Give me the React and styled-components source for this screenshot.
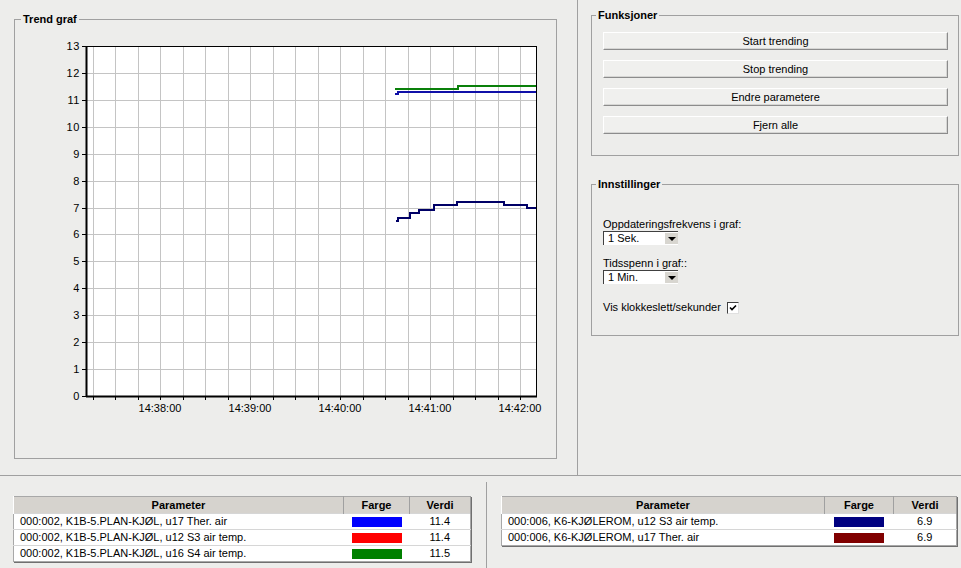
import React from 'react'
import styled, { createGlobalStyle } from 'styled-components'

const GlobalStyle = createGlobalStyle`
  html, body {
    margin: 0;
    padding: 0;
    background: #ededeb;
  }
  body {
    font-family: "Liberation Sans", Arial, sans-serif;
    font-size: 11px;
    color: #000;
  }
`

const Window = styled.div`
  width: 961px;
  height: 568px;
  display: grid;
  grid-template-rows: 475px 1px 1fr;
  background: #ededeb;
  overflow: hidden;
`

const TopArea = styled.div`
  display: grid;
  grid-template-columns: 577px 1px 1fr;
`

const BottomArea = styled.div`
  display: grid;
  grid-template-columns: 486px 1px 1fr;
`

const VLine = styled.div`
  background: #a0a0a0;
  margin-top: ${(p) => p.$top || 0}px;
`

const HLine = styled.div`
  background: #a0a0a0;
`

const LeftPane = styled.div`
  padding: 13px 0 0 14px;
`

const RightPane = styled.div`
  padding: 9px 0 0 13px;
  display: flex;
  flex-direction: column;
  gap: 22px;
`

const GroupBox = styled.fieldset`
  box-sizing: border-box;
  margin: 0;
  min-width: 0;
  width: ${(p) => p.$w}px;
  height: ${(p) => p.$h}px;
  padding: 0;
  border: 1px solid #a0a0a0;
`

const GroupTitle = styled.legend`
  margin-left: ${(p) => p.$indent || 4}px;
  padding: 0 2px;
  font-weight: bold;
  font-size: 11px;
  line-height: 13px;
`

const GroupBody = styled.div`
  padding: ${(p) => p.$pad};
`

const ButtonStack = styled.div`
  display: flex;
  flex-direction: column;
  gap: 10px;
`

const Button = styled.button`
  box-sizing: border-box;
  height: 18px;
  width: 100%;
  margin: 0;
  padding: 0;
  font-family: "Liberation Sans", Arial, sans-serif;
  font-size: 11px;
  color: #000;
  background: #f0f0ee;
  border: 1px solid;
  border-color: #ffffff #8c8c8c #8c8c8c #ffffff;
  box-shadow: inset -1px -1px 0 #d6d6d4;
`

const FieldLabel = styled.div`
  line-height: 13px;
  margin-top: ${(p) => p.$gap || 0}px;
`

const Select = styled.div`
  box-sizing: border-box;
  width: 75px;
  height: 14px;
  display: flex;
  align-items: stretch;
  background: #fff;
  border-left: 1px solid #404040;
  border-top: 1px solid #404040;
`

const SelectValue = styled.span`
  flex: 1;
  padding-left: 4px;
  line-height: 13px;
`

const SelectArrow = styled.span`
  width: 13px;
  margin: 1px 0;
  background: #d8d6d0;
  display: flex;
  align-items: center;
  justify-content: center;

  &::after {
    content: '';
    border-left: 4px solid transparent;
    border-right: 4px solid transparent;
    border-top: 4px solid #000;
  }
`

const CheckRow = styled.div`
  display: flex;
  align-items: center;
  gap: 6px;
  margin-top: 17px;
  line-height: 13px;
`

const CheckBox = styled.span`
  box-sizing: border-box;
  width: 12px;
  height: 12px;
  background: #fff;
  border-left: 1px solid #404040;
  border-top: 1px solid #404040;
  border-right: 1px solid #e0e0e0;
  border-bottom: 1px solid #e0e0e0;
  display: flex;
  align-items: center;
  justify-content: center;
`

const TablePane = styled.div`
  padding: 20px 0 0 ${(p) => p.$left}px;
`

const Grid = styled.table`
  width: ${(p) => p.$w}px;
  table-layout: fixed;
  border-collapse: collapse;
  background: #fff;
  border: 1px solid #a8a8a8;
  box-shadow: 1px 1px 0 #707070;
  font-size: 11px;
`

const HeadCell = styled.th`
  height: 16px;
  padding: 0;
  background: #d6d3ce;
  font-weight: bold;
  text-align: center;
  border-left: 1px solid #fff;
  border-right: 1px solid #a0a0a0;
  line-height: 15px;
`

const Row = styled.tr`
  height: 16px;
  border-top: 1px solid #d6d6d6;
`

const Cell = styled.td`
  padding: 0 0 0 ${(p) => (p.$center ? 0 : 6)}px;
  text-align: ${(p) => (p.$center ? 'center' : 'left')};
  white-space: nowrap;
  overflow: hidden;
  line-height: 15px;
`

const Swatch = styled.span`
  display: inline-block;
  vertical-align: middle;
  width: 50px;
  height: 10px;
  background: ${(p) => p.$color};
`

const X0 = 86
const X1 = 536
const Y0 = 46
const Y1 = 396
const yFor = (v) => Y1 - (v * (Y1 - Y0)) / 13

const gridX = Array.from({ length: 20 }, (_, k) => 92.5 + 22.5 * k)
const timeLabels = { 3: '14:38:00', 7: '14:39:00', 11: '14:40:00', 15: '14:41:00', 19: '14:42:00' }

function TrendChart() {
  const r = (n) => Math.round(n) + 0.5
  return (
    <svg width={541} height={432} viewBox="15 26 541 432" style={{ display: 'block' }}>
      <rect x={X0} y={Y0} width={X1 - X0} height={Y1 - Y0} fill="#fff" />
      {gridX.map((x) => (
        <line key={'gx' + x} x1={r(x)} x2={r(x)} y1={Y0} y2={Y1} stroke="#c4c4c4" />
      ))}
      {Array.from({ length: 14 }, (_, v) => (
        <line key={'gy' + v} x1={X0} x2={X1} y1={r(yFor(v))} y2={r(yFor(v))} stroke="#c4c4c4" />
      ))}
      <rect x={X0 + 0.5} y={Y0 + 0.5} width={X1 - X0} height={Y1 - Y0} fill="none" stroke="#000" />
      <line x1={X0 + 0.5} x2={X0 + 0.5} y1={Y0} y2={Y1 + 1} stroke="#000" strokeWidth={2} />
      <line x1={X0} x2={X1 + 1} y1={Y1 + 0.5} y2={Y1 + 0.5} stroke="#000" strokeWidth={2} />
      {Array.from({ length: 14 }, (_, v) => (
        <g key={'yl' + v}>
          <line x1={X0 - 4} x2={X0} y1={r(yFor(v))} y2={r(yFor(v))} stroke="#000" />
          <text
            x={80}
            y={yFor(v) + 4}
            textAnchor="end"
            fontFamily="Liberation Sans, Arial, sans-serif"
            fontSize={11}
            letterSpacing={0.6}
          >
            {v}
          </text>
        </g>
      ))}
      {gridX.map((x, k) => (
        <g key={'xl' + k}>
          <line x1={r(x)} x2={r(x)} y1={Y1} y2={Y1 + 4} stroke="#000" />
          {timeLabels[k] && (
            <text
              x={x}
              y={412}
              textAnchor="middle"
              fontFamily="Liberation Sans, Arial, sans-serif"
              fontSize={11}
            >
              {timeLabels[k]}
            </text>
          )}
        </g>
      ))}
      <path d="M395 89 H458 V86 H536" fill="none" stroke="#0a800a" strokeWidth={2} />
      <path d="M395 94 H398 V92 H536" fill="none" stroke="#1010a8" strokeWidth={2} />
      <path
        d="M396 221 H398 V218 H410 V213 H419 V210 H434 V205 H457 V202 H504 V205 H527 V208 H536"
        fill="none"
        stroke="#000066"
        strokeWidth={2}
      />
    </svg>
  )
}

function CheckMark() {
  return (
    <svg width="8" height="8" viewBox="0 0 8 8">
      <path d="M1 3.5 L3 5.5 L7 1.5" fill="none" stroke="#000" strokeWidth="1.6" />
    </svg>
  )
}

function ParamTable({ width, cols, rows }) {
  return (
    <Grid $w={width}>
      <colgroup>
        {cols.map((c, i) => (
          <col key={i} style={{ width: c }} />
        ))}
      </colgroup>
      <thead>
        <tr>
          <HeadCell>Parameter</HeadCell>
          <HeadCell>Farge</HeadCell>
          <HeadCell>Verdi</HeadCell>
        </tr>
      </thead>
      <tbody>
        {rows.map((row) => (
          <Row key={row.name}>
            <Cell>{row.name}</Cell>
            <Cell $center>
              <Swatch $color={row.color} />
            </Cell>
            <Cell $center>{row.value}</Cell>
          </Row>
        ))}
      </tbody>
    </Grid>
  )
}

const leftRows = [
  { name: '000:002, K1B-5.PLAN-KJØL, u17 Ther. air', color: '#0000ff', value: '11.4' },
  { name: '000:002, K1B-5.PLAN-KJØL, u12 S3 air temp.', color: '#ff0000', value: '11.4' },
  { name: '000:002, K1B-5.PLAN-KJØL, u16 S4 air temp.', color: '#008000', value: '11.5' },
]

const rightRows = [
  { name: '000:006, K6-KJØLEROM, u12 S3 air temp.', color: '#000080', value: '6.9' },
  { name: '000:006, K6-KJØLEROM, u17 Ther. air', color: '#800000', value: '6.9' },
]

export default function App() {
  return (
    <>
      <GlobalStyle />
      <Window>
        <TopArea>
          <LeftPane>
            <GroupBox $w={543} $h={446}>
              <GroupTitle $indent={6}>Trend graf</GroupTitle>
              <TrendChart />
            </GroupBox>
          </LeftPane>
          <VLine />
          <RightPane>
            <GroupBox $w={368} $h={147}>
              <GroupTitle>Funksjoner</GroupTitle>
              <GroupBody $pad="10px 10px 0 11px">
                <ButtonStack>
                  <Button>Start trending</Button>
                  <Button>Stop trending</Button>
                  <Button>Endre parametere</Button>
                  <Button>Fjern alle</Button>
                </ButtonStack>
              </GroupBody>
            </GroupBox>
            <GroupBox $w={368} $h={158}>
              <GroupTitle>Innstillinger</GroupTitle>
              <GroupBody $pad="27px 11px 0 11px">
                <FieldLabel>Oppdateringsfrekvens i graf:</FieldLabel>
                <Select>
                  <SelectValue>1 Sek.</SelectValue>
                  <SelectArrow />
                </Select>
                <FieldLabel $gap={12}>Tidsspenn i graf::</FieldLabel>
                <Select>
                  <SelectValue>1 Min.</SelectValue>
                  <SelectArrow />
                </Select>
                <CheckRow>
                  <span>Vis klokkeslett/sekunder</span>
                  <CheckBox>
                    <CheckMark />
                  </CheckBox>
                </CheckRow>
              </GroupBody>
            </GroupBox>
          </RightPane>
        </TopArea>
        <HLine />
        <BottomArea>
          <TablePane $left={13}>
            <ParamTable width={457} cols={[330, 66, 61]} rows={leftRows} />
          </TablePane>
          <VLine $top={6} />
          <TablePane $left={14}>
            <ParamTable width={455} cols={[323, 69, 63]} rows={rightRows} />
          </TablePane>
        </BottomArea>
      </Window>
    </>
  )
}
